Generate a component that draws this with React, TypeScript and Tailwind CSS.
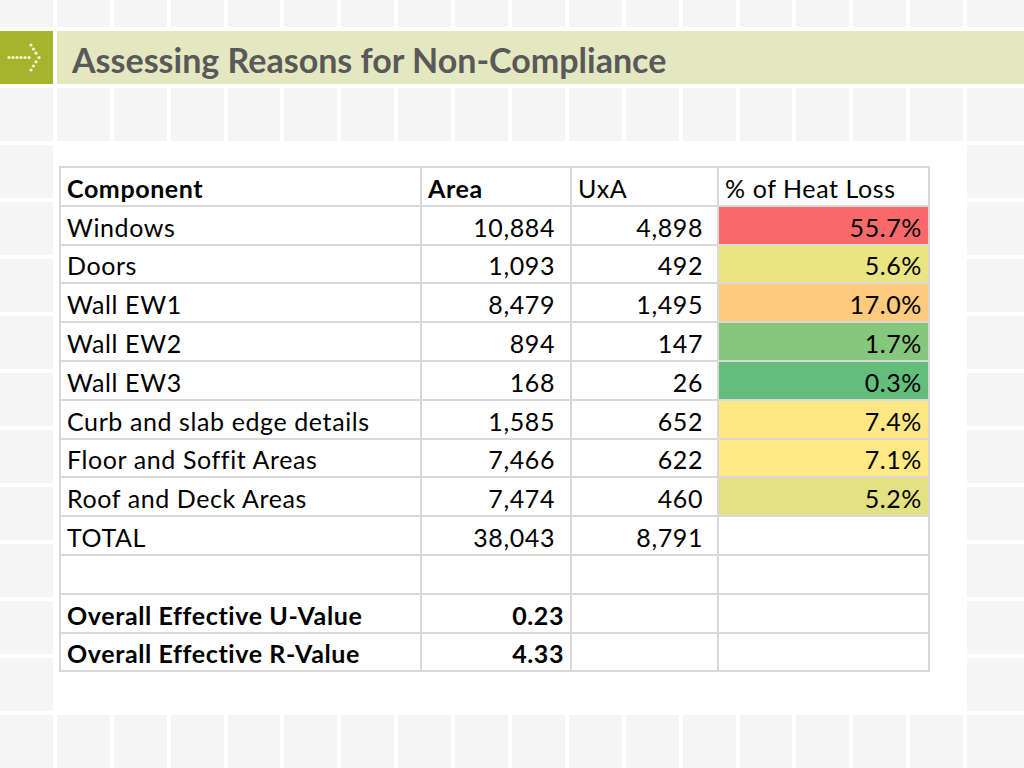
import React from "react";

type Row = {
  label: string;
  area?: string;
  uxa?: string;
  pct?: string;
  color?: string;
};

const rows: Row[] = [
  { label: "Windows", area: "10,884", uxa: "4,898", pct: "55.7%", color: "bg-[#f8696b]" },
  { label: "Doors", area: "1,093", uxa: "492", pct: "5.6%", color: "bg-[#ebe483]" },
  { label: "Wall EW1", area: "8,479", uxa: "1,495", pct: "17.0%", color: "bg-[#fdca7e]" },
  { label: "Wall EW2", area: "894", uxa: "147", pct: "1.7%", color: "bg-[#85c87d]" },
  { label: "Wall EW3", area: "168", uxa: "26", pct: "0.3%", color: "bg-[#63be7b]" },
  { label: "Curb and slab edge details", area: "1,585", uxa: "652", pct: "7.4%", color: "bg-[#ffe884]" },
  { label: "Floor and Soffit Areas", area: "7,466", uxa: "622", pct: "7.1%", color: "bg-[#ffe984]" },
  { label: "Roof and Deck Areas", area: "7,474", uxa: "460", pct: "5.2%", color: "bg-[#e2e282]" },
  { label: "TOTAL", area: "38,043", uxa: "8,791" },
  { label: "" },
];

const Tiles = ({ count, className }: { count: number; className: string }) => (
  <div className={className}>
    {Array.from({ length: count }).map((_, i) => (
      <div key={i} className="bg-[#f5f5f6]" />
    ))}
  </div>
);

const TileRow = ({ h }: { h: string }) => (
  <Tiles
    count={18}
    className={`grid grid-cols-[repeat(17,52.9px)_1fr] gap-x-[4px] ${h}`}
  />
);

const cell = "border-2 border-[#d9d9d9] h-[38.8px] align-bottom leading-[29px] pb-[2px]";

const App = () => {
  return (
    <div
      className="w-[1024px] h-[768px] bg-white flex flex-col gap-[4px] overflow-hidden text-black"
      style={{ fontFamily: "Lato, 'Open Sans', sans-serif" }}
    >
      <TileRow h="h-[27px]" />

      {/* Title bar */}
      <div className="h-[53px] flex gap-[4px]">
        <div className="w-[53px] bg-[#a4b52d] flex items-center justify-center">
          <svg width="53" height="53" viewBox="0 0 53 53">
            {[9, 13, 17, 21, 25, 29].map((x) => (
              <circle key={x} cx={x} cy={26.5} r={1.6} fill="#f3f6d6" />
            ))}
            {[
              [31, 14],
              [33.5, 18],
              [36, 22.2],
              [39, 26.5],
              [36, 30.8],
              [33.5, 35],
              [31, 39],
            ].map(([x, y]) => (
              <circle key={`${x}-${y}`} cx={x} cy={y} r={1.6} fill="#f3f6d6" />
            ))}
          </svg>
        </div>
        <div className="flex-1 bg-[#e4e8c0] flex items-center pl-[15px] pt-[4px]">
          <h1 className="text-[34px] font-bold text-[#595959] leading-[41px]">
            Assessing Reasons for Non-Compliance
          </h1>
        </div>
      </div>

      <TileRow h="h-[53px]" />

      {/* Content */}
      <div className="h-[566px] flex">
        <Tiles count={10} className="w-[53px] grid grid-rows-[repeat(10,53px)] gap-y-[4px]" />
        <div className="flex-1 bg-white pl-[6px] pt-[21px]">
          <table className="border-collapse table-fixed w-[869px] text-[25px] tracking-[0.6px]">
            <colgroup>
              <col className="w-[361px]" />
              <col className="w-[150px]" />
              <col className="w-[147px]" />
              <col className="w-[211px]" />
            </colgroup>
            <tbody>
              <tr>
                <td className={`${cell} pl-[6px] font-bold`}>Component</td>
                <td className={`${cell} pl-[6px] font-bold`}>Area</td>
                <td className={`${cell} pl-[6px]`}>UxA</td>
                <td className={`${cell} pl-[6px]`}>% of Heat Loss</td>
              </tr>
              {rows.map((r, i) => (
                <tr key={i}>
                  <td className={`${cell} pl-[6px]`}>{r.label}</td>
                  <td className={`${cell} text-right pr-[15px]`}>{r.area}</td>
                  <td className={`${cell} text-right pr-[14px]`}>{r.uxa}</td>
                  <td className={`${cell} text-right pr-[6px] ${r.color ?? ""}`}>{r.pct}</td>
                </tr>
              ))}
              <tr>
                <td className={`${cell} pl-[6px] font-bold`}>Overall Effective U-Value</td>
                <td className={`${cell} text-right pr-[6px] font-bold`}>0.23</td>
                <td className={cell} />
                <td className={cell} />
              </tr>
              <tr>
                <td className={`${cell} pl-[6px] font-bold`}>Overall Effective R-Value</td>
                <td className={`${cell} text-right pr-[6px] font-bold`}>4.33</td>
                <td className={cell} />
                <td className={cell} />
              </tr>
            </tbody>
          </table>
        </div>
        <Tiles count={10} className="w-[57px] grid grid-rows-[repeat(10,53px)] gap-y-[4px]" />
      </div>

      <TileRow h="h-[53px]" />
    </div>
  );
};

export default App;
